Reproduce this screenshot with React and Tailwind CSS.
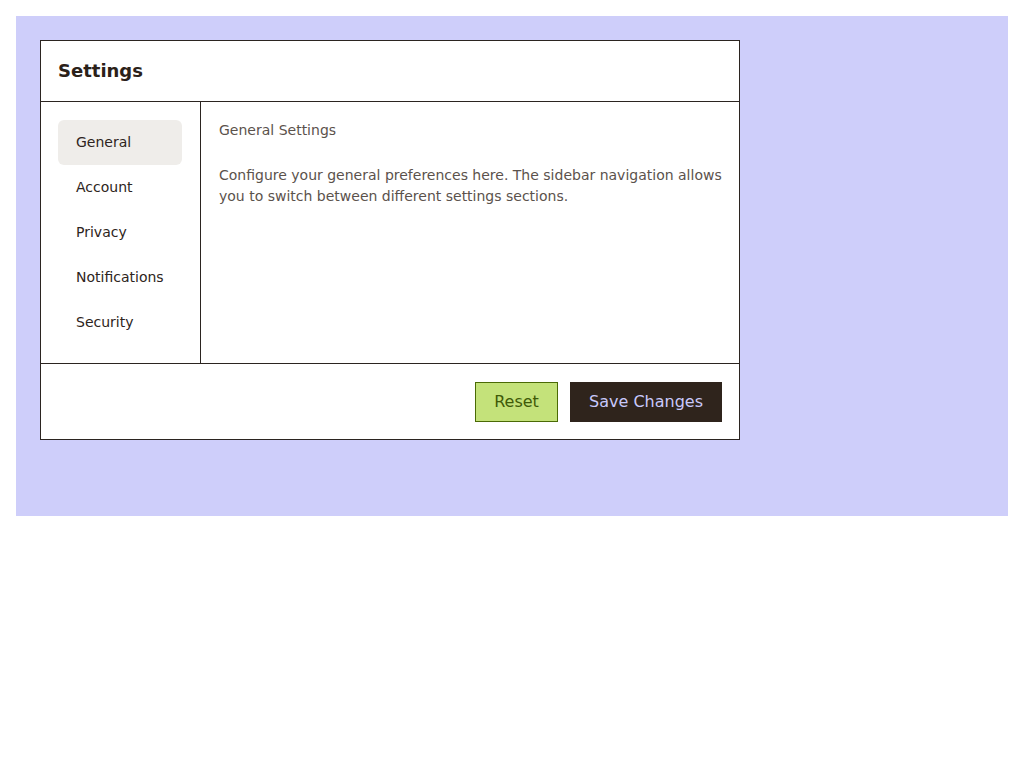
import React, { useState } from 'react';

const secciones = ['General', 'Account', 'Privacy', 'Notifications', 'Security'];

export default function App() {
  const [activa, setActiva] = useState('General');

  return (
    <div className="m-4 h-[500px] bg-[#cecefa] p-6 font-['DejaVu_Sans',sans-serif]">
      <div className="flex w-[700px] flex-col border border-[#2b2420] bg-white">
        <div className="border-b border-[#2b2420] px-[17px] py-4">
          <h2 className="text-lg leading-7 font-bold text-[#2b2119]">Settings</h2>
        </div>

        <div className="flex border-b border-[#2b2420]">
          <nav className="flex w-40 flex-col border-r border-[#2b2420] py-[18px] pr-[18px] pl-[17px]">
            {secciones.map((s) => (
              <button
                key={s}
                onClick={() => setActiva(s)}
                className={
                  s === activa
                    ? 'rounded-md bg-[#efedea] px-[18px] py-3 text-left text-sm leading-[21px] text-[#2d2420]'
                    : 'rounded-md px-[18px] py-3 text-left text-sm leading-[21px] text-[#2d2420]'
                }
              >
                {s}
              </button>
            ))}
          </nav>

          <div className="flex-1 py-[18px] pr-[16px] pl-[18px] text-sm leading-[21px] text-[#5b524c]">
            <p>{activa} Settings</p>
            <p className="mt-6">
              Configure your general preferences here. The sidebar navigation allows you to switch
              between different settings sections.
            </p>
          </div>
        </div>

        <div className="flex justify-end gap-3 pt-[18px] pr-[17px] pb-[17px]">
          <button className="h-10 w-[83px] border border-[#4a6a05] bg-[#c4e27a] text-center text-base text-[#3f5a08]">
            Reset
          </button>
          <button className="h-10 border border-[#2f241c] bg-[#2f241c] px-[18px] text-base text-[#c9c9fb]">
            Save Changes
          </button>
        </div>
      </div>
    </div>
  );
}
